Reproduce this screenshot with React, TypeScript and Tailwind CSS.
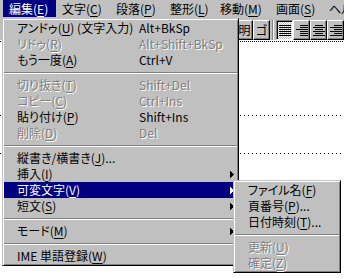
import clsx from "clsx";

type Entry =
  | { sep: true }
  | {
      sep?: false;
      label: string; // "&" marks the access key
      shortcut?: string;
      disabled?: boolean;
      sub?: boolean;
      active?: boolean;
    };

const MENUBAR = [
  { label: "編集(&E)", w: "w-[53px]", active: true },
  { label: "文字(&C)", w: "w-[54px]" },
  { label: "段落(&P)", w: "w-[54px]" },
  { label: "整形(&L)", w: "w-[50px]" },
  { label: "移動(&M)", w: "w-[56px]" },
  { label: "画面(&S)", w: "w-[53px]" },
  { label: "ヘルプ(&H)", w: "w-[60px]" },
];

const EDIT_MENU: Entry[] = [
  { label: "アンドゥ(&U) (文字入力)", shortcut: "Alt+BkSp" },
  { label: "リドゥ(&R)", shortcut: "Alt+Shift+BkSp", disabled: true },
  { label: "もう一度(&A)", shortcut: "Ctrl+V" },
  { sep: true },
  { label: "切り抜き(&T)", shortcut: "Shift+Del", disabled: true },
  { label: "コピー(&C)", shortcut: "Ctrl+Ins", disabled: true },
  { label: "貼り付け(&P)", shortcut: "Shift+Ins" },
  { label: "削除(&D)", shortcut: "Del", disabled: true },
  { sep: true },
  { label: "縦書き/横書き(&J)..." },
  { label: "挿入(&I)", sub: true },
  { label: "可変文字(&V)", sub: true, active: true },
  { label: "短文(&S)", sub: true },
  { sep: true },
  { label: "モード(&M)", sub: true },
  { sep: true },
  { label: "IME 単語登録(&W)" },
];

const VARIABLE_MENU: Entry[] = [
  { label: "ファイル名(&F)" },
  { label: "頁番号(&P)..." },
  { label: "日付時刻(&T)..." },
  { sep: true },
  { label: "更新(&U)", disabled: true },
  { label: "確定(&Z)", disabled: true },
];

function Label({ text }: { text: string }) {
  const i = text.indexOf("&");
  if (i < 0) return <>{text}</>;
  return (
    <>
      {text.slice(0, i)}
      <span className="underline underline-offset-[2px]">{text[i + 1]}</span>
      {text.slice(i + 2)}
    </>
  );
}

function Arrow({ white }: { white?: boolean }) {
  return (
    <svg width="4" height="7" viewBox="0 0 4 7" shapeRendering="crispEdges">
      <polygon points="0,0 4,3.5 0,7" fill={white ? "#fff" : "#000"} />
    </svg>
  );
}

function Menu({ entries, labelWidth, className }: { entries: Entry[]; labelWidth?: string; className: string }) {
  return (
    <div
      className={clsx(
        "absolute border border-t-[#c0c0c0] border-l-[#c0c0c0] border-r-black border-b-black bg-[#c0c0c0] p-px shadow-[inset_1px_1px_0_#fff,inset_-1px_-1px_0_#808080]",
        className
      )}
    >
      {entries.map((e, idx) =>
        e.sep ? (
          <div key={idx} className="h-[9px] pt-[4px]">
            <div className="h-[2px] border-t border-t-[#808080] border-b border-b-white" />
          </div>
        ) : (
          <div
            key={idx}
            className={clsx(
              "flex h-4 items-center pl-[13px] pr-[3px] whitespace-nowrap",
              e.active && "bg-[#000080] text-white",
              e.disabled && "text-[#808080] [text-shadow:1px_1px_0_#fff]"
            )}
          >
            <span className={clsx("shrink-0", labelWidth)}>
              <Label text={e.label} />
            </span>
            {e.shortcut ? <span>{e.shortcut}</span> : null}
            {e.sub ? (
              <span className="ml-auto flex">
                <Arrow white={e.active} />
              </span>
            ) : null}
          </div>
        )
      )}
    </div>
  );
}

function ToolButton({ children, pressed }: { children: React.ReactNode; pressed?: boolean }) {
  return (
    <div
      className={clsx(
        "flex h-5 w-5 items-center justify-center border",
        pressed
          ? "border-t-[#808080] border-l-[#808080] border-r-white border-b-white bg-[repeating-conic-gradient(#fff_0_25%,#c0c0c0_0_50%)] bg-[length:2px_2px] shadow-[inset_1px_1px_0_#000]"
          : "border-t-white border-l-white border-r-black border-b-black bg-[#c0c0c0] shadow-[inset_-1px_-1px_0_#808080]"
      )}
    >
      {children}
    </div>
  );
}

function AlignIcon({ rows }: { rows: [number, number][] }) {
  return (
    <svg width="12" height="11" viewBox="0 0 12 11" shapeRendering="crispEdges">
      {rows.map(([x, w], i) => (
        <rect key={i} x={x} y={i * 2} width={w} height="1" fill="#000" />
      ))}
    </svg>
  );
}

export default function App() {
  return (
    <div className="relative flex h-[278px] w-[344px] flex-col overflow-hidden bg-white font-['Noto_Sans_CJK_JP',sans-serif] text-[12px] leading-4 text-black [font-feature-settings:'palt']">
      <div className="flex h-[18px] shrink-0 bg-[#c0c0c0] pl-[3px]">
        {MENUBAR.map((m) => (
          <div
            key={m.label}
            className={clsx(
              "flex h-[17px] shrink-0 items-center pl-[6px] whitespace-nowrap",
              m.w,
              m.active && "bg-[#000080] text-white"
            )}
          >
            <Label text={m.label} />
          </div>
        ))}
      </div>

      <div className="flex h-[22px] shrink-0 items-start bg-[#c0c0c0] pt-[2px] pl-[236px]">
        <ToolButton>明</ToolButton>
        <ToolButton>ゴ</ToolButton>
        <div className="mx-[2px] h-5 w-[2px] border-l border-l-[#808080] border-r border-r-white" />
        <ToolButton pressed>
          <AlignIcon rows={[[0, 12], [0, 12], [0, 12], [0, 12], [0, 12], [0, 12]]} />
        </ToolButton>
        <ToolButton>
          <AlignIcon rows={[[4, 8], [4, 8], [0, 12], [4, 8], [4, 8], [4, 8]]} />
        </ToolButton>
        <ToolButton>
          <AlignIcon rows={[[2, 8], [0, 12], [2, 8], [0, 12], [2, 8], [0, 12]]} />
        </ToolButton>
        <ToolButton>
          <AlignIcon rows={[[4, 8], [0, 12], [4, 8], [0, 12], [4, 8], [0, 12]]} />
        </ToolButton>
      </div>

      <div className="flex-1">
        <div className="mt-px h-px bg-[repeating-linear-gradient(90deg,#000_0_1px,transparent_1px_2px)]" />
        <div className="mt-[73px] h-px bg-[repeating-linear-gradient(90deg,#000_0_1px,transparent_1px_4px)]" />
        <div className="mt-[37px] h-px bg-[repeating-linear-gradient(90deg,#000_0_1px,transparent_1px_4px)]" />
      </div>

      <Menu entries={EDIT_MENU} labelWidth="w-[122px]" className="left-[2px] top-[18px] w-[237px]" />
      <Menu entries={VARIABLE_MENU} className="left-[233px] top-[180px] w-[108px]" />
    </div>
  );
}
